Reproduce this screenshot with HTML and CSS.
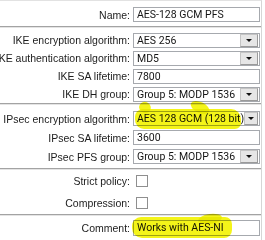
FILE: index.html
```html
<!DOCTYPE html>
<html>
<head>
<meta charset="utf-8">
<link rel="stylesheet" href="styles.css">
</head>
<body>
<div class="panel">
  <div class="section s-name">
    <div class="row r19"><label class="lbl"><span>Name:</span></label><div class="input">AES-128 GCM PFS</div></div>
  </div>
  <div class="sep"></div>
  <div class="section s-ike">
    <div class="row r18"><label class="lbl"><span>IKE encryption algorithm:</span></label><div class="select"><span class="val">AES 256</span><span class="btn"></span></div></div>
    <div class="row r18"><label class="lbl"><span>IKE authentication algorithm:</span></label><div class="select"><span class="val">MD5</span><span class="btn"></span></div></div>
    <div class="row r18"><label class="lbl"><span>IKE SA lifetime:</span></label><div class="input">7800</div></div>
    <div class="row r18"><label class="lbl"><span>IKE DH group:</span></label><div class="select"><span class="val">Group 5: MODP 1536</span><span class="btn"></span></div></div>
  </div>
  <div class="sep"></div>
  <div class="section s-ipsec">
    <div class="row r19"><label class="lbl"><span>IPsec encryption algorithm:</span></label><div class="select"><span class="val">AES 128 GCM (128 bit)</span><span class="btn"></span></div></div>
    <div class="row r19"><label class="lbl"><span>IPsec SA lifetime:</span></label><div class="input">3600</div></div>
    <div class="row r19"><label class="lbl"><span>IPsec PFS group:</span></label><div class="select"><span class="val">Group 5: MODP 1536</span><span class="btn"></span></div></div>
  </div>
  <div class="sep"></div>
  <div class="section s-check">
    <div class="row r22"><label class="lbl"><span>Strict policy:</span></label><div class="check"></div></div>
    <div class="row r22"><label class="lbl"><span>Compression:</span></label><div class="check"></div></div>
  </div>
  <div class="sep"></div>
  <div class="section s-comment">
    <div class="row r20"><label class="lbl"><span>Comment:</span></label><div class="input tall">Works with AES-NI</div></div>
  </div>

  <div class="hl hl-a"></div>
  <div class="hl hl-b"></div>
  <div class="hl hl-c"></div>
  <div class="hl hl-d"></div>
  <div class="hl hl-e"></div>
</div>
</body>
</html>
```
FILE: styles.css
```css
html, body {
  margin: 0;
  padding: 0;
  background: #ffffff;
}
.panel {
  position: relative;
  width: 262px;
  height: 240px;
  border-top: 1px solid #e2e2e2;
  border-right: 1px solid #d6d6d6;
  box-sizing: border-box;
  overflow: hidden;
}
.section {
  display: flex;
  flex-direction: column;
}
.s-name { padding-top: 4px; padding-bottom: 2px; }
.s-ike { padding-top: 3px; padding-bottom: 0; }
.s-ipsec { padding-top: 4px; padding-bottom: 2px; }
.s-check { padding-top: 0; }
.s-comment { padding-top: 2px; }
.sep {
  height: 1px;
  border-top: 1px solid #a3a3a3;
  background: #e4e4e4;
}
.row {
  display: grid;
  grid-template-columns: 130px 127px;
  column-gap: 3px;
  align-items: center;
}
.r18 { height: 18px; }
.r19 { height: 19px; }
.r20 { height: 20px; }
.r22 { height: 22px; }
.lbl {
  display: flex;
  justify-content: flex-end;
  min-width: 0;
  font-family: "Liberation Sans", Arial, sans-serif;
  font-size: 10.5px;
  color: #1c1c1c;
  white-space: nowrap;
}
.lbl span { flex: none; }
.input, .select {
  box-sizing: border-box;
  height: 15px;
  border: 1px solid #a6a9ae;
  background: #fff;
  font-family: "Roboto", "Liberation Sans", sans-serif;
  font-size: 10.5px;
  line-height: 13px;
  color: #151515;
  padding-left: 3px;
  white-space: nowrap;
  overflow: hidden;
}
.input.tall { height: 16px; line-height: 14px; }
.select {
  display: flex;
  align-items: center;
  padding-right: 1px;
}
.val { flex: 1; }
.btn {
  position: relative;
  width: 16px;
  height: 11px;
  background: #e6e6e6;
  border: 1px solid #c4c4c4;
  border-right-color: #9a9a9a;
  border-bottom-color: #9a9a9a;
  display: flex;
  align-items: center;
  justify-content: center;
}
.btn::after {
  content: "";
  width: 0;
  height: 0;
  border-left: 3px solid transparent;
  border-right: 3px solid transparent;
  border-top: 3px solid #111;
}
.check {
  width: 12px;
  height: 12px;
  box-sizing: border-box;
  border: 1px solid #8f8f8f;
  background: #fff;
  margin-left: 3px;
}
.hl {
  position: absolute;
  background: #f4f40c;
  mix-blend-mode: multiply;
  opacity: 0.95;
}
.hl-a { left: 135px; top: 108px; width: 106px; height: 20px; border-radius: 8px 10px 6px 9px; }
.hl-b { left: 139px; top: 101px; width: 12px; height: 11px; border-radius: 50%; transform: rotate(30deg); }
.hl-c { left: 190px; top: 101px; width: 20px; height: 11px; border-radius: 50%; transform: rotate(25deg); }
.hl-d { left: 132px; top: 216px; width: 100px; height: 21px; border-radius: 9px 7px 8px 10px; }
.hl-e { left: 198px; top: 213px; width: 24px; height: 10px; border-radius: 50%; transform: rotate(-8deg); }
```
